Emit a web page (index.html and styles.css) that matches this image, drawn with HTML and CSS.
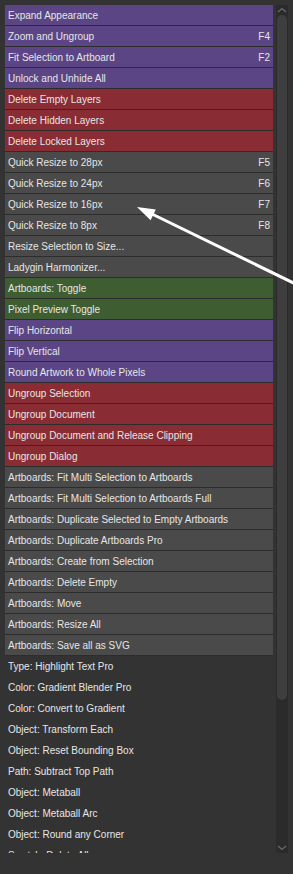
FILE: index.html
```html
<!DOCTYPE html>
<html lang="en">
<head>
    <meta charset="utf-8">
    <title>Actions panel</title>
    <link rel="stylesheet" href="styles.css">
</head>

<body>
    <main class="panel">
        <ul class="list">
            <li class="purple">Expand Appearance</li>
            <li class="purple">Zoom and Ungroup<span class="key">F4</span></li>
            <li class="purple">Fit Selection to Artboard<span class="key">F2</span></li>
            <li class="purple">Unlock and Unhide All</li>
            <li class="red">Delete Empty Layers</li>
            <li class="red">Delete Hidden Layers</li>
            <li class="red">Delete Locked Layers</li>
            <li class="gray">Quick Resize to 28px<span class="key">F5</span></li>
            <li class="gray">Quick Resize to 24px<span class="key">F6</span></li>
            <li class="gray">Quick Resize to 16px<span class="key">F7</span></li>
            <li class="gray">Quick Resize to 8px<span class="key">F8</span></li>
            <li class="gray">Resize Selection to Size...</li>
            <li class="gray">Ladygin Harmonizer...</li>
            <li class="green">Artboards: Toggle</li>
            <li class="green">Pixel Preview Toggle</li>
            <li class="purple">Flip Horizontal</li>
            <li class="purple">Flip Vertical</li>
            <li class="purple">Round Artwork to Whole Pixels</li>
            <li class="red">Ungroup Selection</li>
            <li class="red">Ungroup Document</li>
            <li class="red">Ungroup Document and Release Clipping</li>
            <li class="red">Ungroup Dialog</li>
            <li class="gray">Artboards: Fit Multi Selection to Artboards</li>
            <li class="gray">Artboards: Fit Multi Selection to Artboards Full</li>
            <li class="gray">Artboards: Duplicate Selected to Empty Artboards</li>
            <li class="gray">Artboards: Duplicate Artboards Pro</li>
            <li class="gray">Artboards: Create from Selection</li>
            <li class="gray">Artboards: Delete Empty</li>
            <li class="gray">Artboards: Move</li>
            <li class="gray">Artboards: Resize All</li>
            <li class="gray">Artboards: Save all as SVG</li>
            <li>Type: Highlight Text Pro</li>
            <li>Color: Gradient Blender Pro</li>
            <li>Color: Convert to Gradient</li>
            <li>Object: Transform Each</li>
            <li>Object: Reset Bounding Box</li>
            <li>Path: Subtract Top Path</li>
            <li>Object: Metaball</li>
            <li>Object: Metaball Arc</li>
            <li>Object: Round any Corner</li>
            <li>Swatch: Delete All</li>
        </ul>
        <div class="scrollbar">
            <svg class="chevron" width="10" height="6" viewBox="0 0 10 6"><path d="M1 5 L5 1.5 L9 5" fill="none" stroke="#6a6a6a" stroke-width="1.3"/></svg>
            <div class="thumb"></div>
            <div class="rest"></div>
            <svg class="chevron" width="10" height="6" viewBox="0 0 10 6"><path d="M1 1 L5 4.5 L9 1" fill="none" stroke="#6a6a6a" stroke-width="1.3"/></svg>
        </div>
    </main>

    <svg class="pointer" width="293" height="874" viewBox="0 0 293 874">
        <line x1="152" y1="214" x2="310" y2="291" stroke="#fff" stroke-width="3"/>
        <polygon points="137,207 150.6,220.3 155.8,209.5" fill="#fff"/>
    </svg>
</body>

</html>
```

FILE: styles.css
```css
html,
body {
    margin: 0;
    padding: 0;
    width: 100%;
    height: 100%;
    overflow: hidden;
}

body {
    background-color: #333333;
    color: #e6e6e6;
    font-family: "Liberation Sans", Arial, sans-serif;
    font-size: 10px;
}

.panel {
    display: flex;
    gap: 3px;
    height: 848px;
    padding: 5px 5px 0 5px;
}

.list {
    flex: 1 1 0;
    min-width: 0;
    margin: 0;
    padding: 0;
    list-style: none;
    overflow: hidden;
}

.list>li {
    display: flex;
    justify-content: space-between;
    align-items: center;
    height: 20px;
    padding: 0 3px 0 3px;
    border-bottom: 1px solid #2c2c2c;
    white-space: nowrap;
}

.list>li:not([class]) {
    border-bottom-color: transparent;
}

.list>li.purple {
    background-color: #5b4585;
}

.list>li.red {
    background-color: #892c33;
}

.list>li.gray {
    background-color: #4a4a4a;
}

.list>li.green {
    background-color: #3e5e31;
}

.scrollbar {
    display: flex;
    flex-direction: column;
    align-items: center;
    width: 12px;
    background-color: #2b2b2b;
}

.chevron {
    flex: none;
    margin: 2px 0;
}

.thumb {
    width: 10px;
    height: 685px;
    border-radius: 5px;
    background-color: #3e3e3e;
}

.rest {
    flex: 1;
}

.pointer {
    position: absolute;
    left: 0;
    top: 0;
    pointer-events: none;
}
```
